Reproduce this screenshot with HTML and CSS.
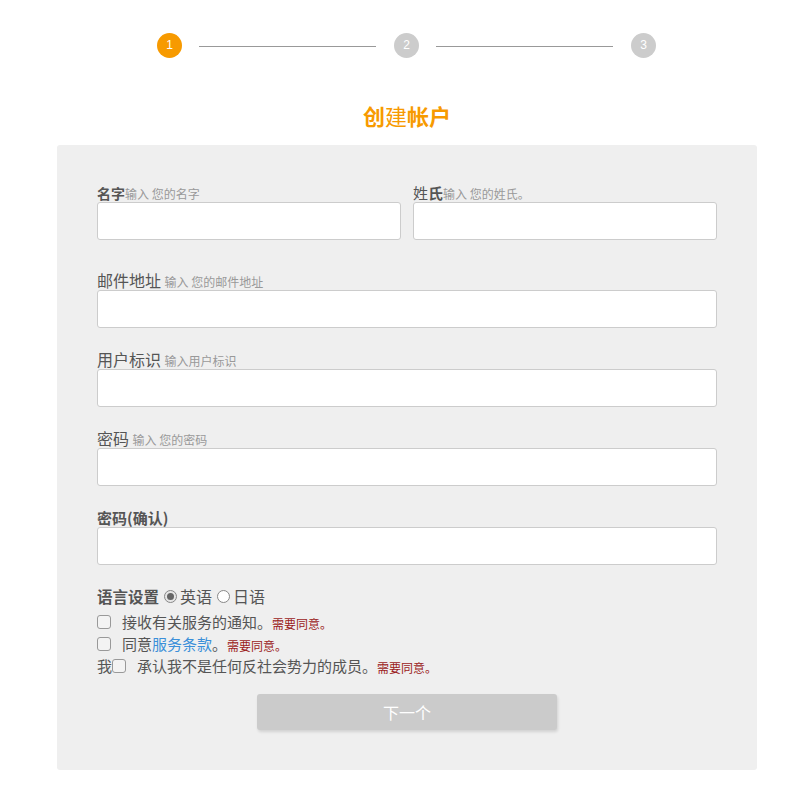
FILE: index.html
```html
<!DOCTYPE html>
<html lang="zh-CN">
<head>
<meta charset="utf-8">
<title>创建帐户</title>
<link rel="stylesheet" href="styles.css">
</head>
<body>
<div class="stepper">
  <span class="step active">1</span>
  <span class="line"></span>
  <span class="step">2</span>
  <span class="line"></span>
  <span class="step">3</span>
</div>
<h1 class="title"><b>创</b><span class="thin">建</span><b>帐户</b></h1>
<form class="panel">
  <div class="row">
    <div class="col">
      <label class="lbl"><b class="small">名字</b><span class="hint">输入 您的名字</span></label>
      <div class="input"></div>
    </div>
    <div class="col">
      <label class="lbl"><span class="mid">姓</span><b class="mid">氏</b><span class="hint">输入 您的姓氏。</span></label>
      <div class="input"></div>
    </div>
  </div>
  <div class="field">
    <label class="lbl"><span class="big">邮件地址</span> <span class="hint">输入 您的邮件地址</span></label>
    <div class="input"></div>
  </div>
  <div class="field">
    <label class="lbl"><span class="big">用户标识</span> <span class="hint">输入用户标识</span></label>
    <div class="input"></div>
  </div>
  <div class="field">
    <label class="lbl"><span class="big">密码</span> <span class="hint">输入 您的密码</span></label>
    <div class="input"></div>
  </div>
  <div class="field">
    <label class="lbl"><b class="mid">密码(确认)</b></label>
    <div class="input"></div>
  </div>
  <div class="lang">
    <b class="mid">语言设置</b>
    <span class="radio checked"></span><span class="opt">英语</span>
    <span class="radio"></span><span class="opt">日语</span>
  </div>
  <div class="checks">
    <div class="check"><span class="box"></span><span class="ctext">接收有关服务的通知。</span><span class="req">需要同意。</span></div>
    <div class="check"><span class="box"></span><span class="ctext">同意<a class="link">服务条款</a>。</span><span class="req">需要同意。</span></div>
    <div class="check"><span class="ctext">我</span><span class="box"></span><span class="ctext">承认我不是任何反社会势力的成员。</span><span class="req">需要同意。</span></div>
  </div>
  <div class="actions">
    <span class="btn">下一个</span>
  </div>
</form>
</body>
</html>
```
FILE: styles.css
```css
* { box-sizing: border-box; }
body {
  margin: 0;
  background: #fff;
  font-family: "Noto Sans CJK SC", "Noto Sans", sans-serif;
  color: #555;
}
.stepper {
  display: flex;
  align-items: center;
  padding: 33px 0 0 157px;
  height: 58px;
}
.step {
  width: 25px;
  height: 25px;
  border-radius: 50%;
  background: #ccc;
  color: #fff;
  font-family: "Liberation Sans", sans-serif;
  font-size: 12px;
  line-height: 25px;
  text-align: center;
}
.step.active { background: #f79a00; }
.line {
  width: 177px;
  height: 1px;
  background: #999;
  margin: 2px 18px 0 17px;
}
.title {
  margin: 0;
  padding: 43px 0 0 2px;
  height: 87px;
  text-align: center;
  font-size: 22px;
  line-height: 28px;
  color: #f79a00;
  font-weight: normal;
}
.title b { font-weight: 700; }
.title .thin { font-weight: 400; }
.panel {
  display: block;
  width: 700px;
  margin: 0 0 0 57px;
  background: #efefef;
  border-radius: 3px;
  padding: 37px 40px 40px;
}
.row {
  display: flex;
  gap: 12px;
  margin-bottom: 30px;
}
.col { flex: 1; }
.field { margin-bottom: 21px; }
.lbl {
  display: block;
  height: 20px;
  line-height: 20px;
  white-space: nowrap;
}
.small { font-size: 14px; font-weight: 700; color: #555; }
.mid { font-size: 15px; color: #555; }
b.mid { font-weight: 700; }
.lang b.mid { font-size: 15.5px; }
.big { font-size: 16px; color: #555; }
.hint { font-size: 12px; color: #999; }
.input {
  height: 38px;
  background: #fff;
  border: 1px solid #ccc;
  border-radius: 3px;
}
.lang {
  display: flex;
  align-items: center;
  height: 20px;
  margin-top: 1px;
  line-height: 20px;
}
.lang .mid { margin-right: 5px; }
.opt { font-size: 16px; color: #555; margin-right: 5px; }
.radio {
  width: 13px;
  height: 13px;
  border-radius: 50%;
  border: 1px solid #888;
  background: #fff;
  margin-right: 3px;
  position: relative;
}
.radio.checked { background: #e6e6e6; }
.radio.checked::after {
  content: "";
  position: absolute;
  left: 2px;
  top: 2px;
  width: 7px;
  height: 7px;
  border-radius: 50%;
  background: #666;
}
.checks { margin-top: 5px; }
.check {
  display: flex;
  align-items: center;
  height: 22px;
  white-space: nowrap;
}
.box {
  width: 14px;
  height: 14px;
  border: 1.5px solid #999;
  border-radius: 3px;
  background: #f3f3f3;
  margin-right: 11px;
  flex: none;
}
.ctext {
  display: inline-block;
  font-size: 15px;
  line-height: 20px;
  height: 20px;
  color: #555;
}
.link { color: #3b8fd9; text-decoration: none; }
.req {
  display: inline-block;
  font-size: 12px;
  line-height: 16px;
  height: 16px;
  color: #9b1b1b;
  margin-top: 3px;
}
.actions {
  display: flex;
  justify-content: center;
  margin-top: 17px;
}
.btn {
  width: 300px;
  height: 36px;
  line-height: 36px;
  text-align: center;
  background: #cbcbcb;
  color: #fff;
  font-size: 16px;
  border-radius: 3px;
  box-shadow: 1px 2px 3px rgba(0,0,0,0.12);
}
```
